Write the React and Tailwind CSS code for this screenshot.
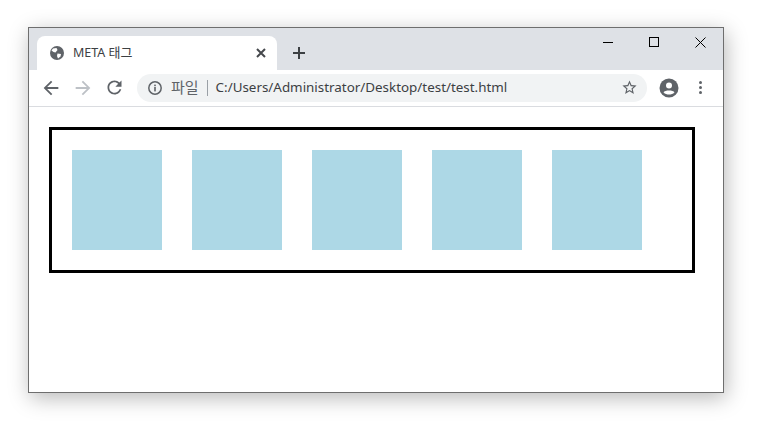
const squares = [1, 2, 3, 4, 5];

function Icon({ d, size = 24, color = "#5f6368" }) {
  return (
    <svg width={size} height={size} viewBox="0 0 24 24" className="shrink-0">
      <path d={d} fill={color} />
    </svg>
  );
}

function Globe() {
  return (
    <svg width="16" height="16" viewBox="0 0 16 16">
      <circle cx="8" cy="8" r="7" fill="#5f6368" />
      <path d="M4 3.5 L7.5 3 L8.5 5 L6.5 7.5 L4.5 7 L2.5 5.5 Z" fill="#fff" />
      <path d="M8.5 8.5 L12 9 L11.5 11.5 L9 13.5 L8 11 Z" fill="#fff" />
    </svg>
  );
}

function Account() {
  return (
    <svg width="20" height="20" viewBox="0 0 20 20">
      <circle cx="10" cy="10" r="9.5" fill="#5f6368" />
      <circle cx="10" cy="7.5" r="3" fill="#fff" />
      <path d="M4.5 14.2 C6 12 14 12 15.5 14.2 C14 16 12 16.6 10 16.6 C8 16.6 6 16 4.5 14.2 Z" fill="#fff" />
    </svg>
  );
}

function Info() {
  return (
    <svg width="16" height="16" viewBox="0 0 16 16">
      <circle cx="8" cy="8" r="6.2" fill="none" stroke="#5f6368" strokeWidth="1.5" />
      <rect x="7.2" y="7" width="1.6" height="4.4" fill="#5f6368" />
      <rect x="7.2" y="4.6" width="1.6" height="1.6" fill="#5f6368" />
    </svg>
  );
}

const arrowBack = "M20 11H7.83l5.59-5.59L12 4l-8 8 8 8 1.41-1.41L7.83 13H20v-2z";
const arrowForward = "M12 4l-1.41 1.41L16.17 11H4v2h12.17l-5.58 5.59L12 20l8-8z";
const reload = "M17.65 6.35C16.2 4.9 14.21 4 12 4c-4.42 0-7.99 3.58-7.99 8s3.57 8 7.99 8c3.73 0 6.84-2.55 7.73-6h-2.08c-.82 2.33-3.04 4-5.65 4-3.31 0-6-2.69-6-6s2.69-6 6-6c1.66 0 3.14.69 4.22 1.78L13 11h7V4l-2.35 2.35z";
const star = "M22 9.24l-7.19-.62L12 2 9.19 8.63 2 9.24l5.46 4.73L5.82 21 12 17.27 18.18 21l-1.63-7.03L22 9.24zM12 15.4l-3.76 2.27 1-4.28-3.32-2.88 4.38-.38L12 6.1l1.71 4.04 4.38.38-3.32 2.88 1 4.28L12 15.4z";

export default function App() {
  return (
    <div className="w-[760px] h-[424px] bg-white pl-[28px] pt-[27px] font-['Noto_Sans','Noto_Sans_CJK_KR',sans-serif]">
      <div className="w-[696px] h-[366px] flex flex-col bg-white border border-[#6e6e6e] shadow-[2px_5px_20px_rgba(0,0,0,0.28)]">
        {/* tab strip */}
        <div className="h-[42px] flex bg-[#dee1e6]">
          <div className="ml-[8px] mt-[8px] w-[240px] h-[34px] bg-white rounded-t-[8px] flex items-center pl-[12px] pr-[9px]">
            <Globe />
            <span className="ml-[8px] text-[12.5px] text-[#3c4043] flex-1">
              META <span className="text-[13px]">태그</span>
            </span>
            <svg width="14" height="14" viewBox="0 0 14 14">
              <path d="M3 3L11 11M11 3L3 11" stroke="#45484c" strokeWidth="2" />
            </svg>
          </div>
          <div className="ml-[14px] mt-[17px]">
            <svg width="16" height="16" viewBox="0 0 16 16">
              <path d="M8 2V14M2 8H14" stroke="#3c4043" strokeWidth="2" />
            </svg>
          </div>
          <div className="ml-auto flex h-[28px]">
            <div className="w-[46px] flex items-center justify-center">
              <svg width="10" height="10" viewBox="0 0 10 10" shapeRendering="crispEdges">
                <path d="M0 5.5H10" stroke="#000" strokeWidth="1" />
              </svg>
            </div>
            <div className="w-[46px] flex items-center justify-center">
              <svg width="10" height="10" viewBox="0 0 10 10" shapeRendering="crispEdges">
                <rect x="0.5" y="0.5" width="9" height="9" fill="none" stroke="#000" strokeWidth="1" />
              </svg>
            </div>
            <div className="w-[46px] flex items-center justify-center">
              <svg width="11" height="11" viewBox="0 0 11 11">
                <path d="M0.5 0.5L10.5 10.5M10.5 0.5L0.5 10.5" stroke="#000" strokeWidth="1" />
              </svg>
            </div>
          </div>
        </div>
        {/* toolbar */}
        <div className="h-[37px] flex items-center bg-white border-b border-[#dadce0] pl-[11px] pb-px">
          <Icon d={arrowBack} size={22} />
          <div className="ml-[10px]">
            <Icon d={arrowForward} size={22} color="#bdc1c6" />
          </div>
          <div className="ml-[10px]">
            <Icon d={reload} size={21} />
          </div>
          <div className="ml-[12px] w-[510px] h-[28px] rounded-full bg-[#f1f3f4] flex items-center pl-[10px] pr-[9px]">
            <Info />
            <span className="ml-[8px] text-[15px] text-[#5f6368]">파일</span>
            <span className="ml-[8px] w-px h-[16px] bg-[#9aa0a6]"></span>
            <span className="ml-[8px] text-[13.4px] text-[#3c4043] flex-1">C:/Users/Administrator/Desktop/test/test.html</span>
            <Icon d={star} size={17} />
          </div>
          <div className="ml-[12px]">
            <Account />
          </div>
          <div className="ml-[20px] flex flex-col gap-[2px]">
            <span className="w-[3px] h-[3px] rounded-full bg-[#5f6368]"></span>
            <span className="w-[3px] h-[3px] rounded-full bg-[#5f6368]"></span>
            <span className="w-[3px] h-[3px] rounded-full bg-[#5f6368]"></span>
          </div>
        </div>
        {/* page */}
        <div className="flex-1 bg-white pl-[20px] pt-[20px]">
          <div className="w-[646px] h-[146px] border-[3px] border-black p-[20px] flex gap-[30px]">
            {squares.map((n) => (
              <div key={n} className="w-[90px] h-[100px] bg-[#add8e6]"></div>
            ))}
          </div>
        </div>
      </div>
    </div>
  );
}
